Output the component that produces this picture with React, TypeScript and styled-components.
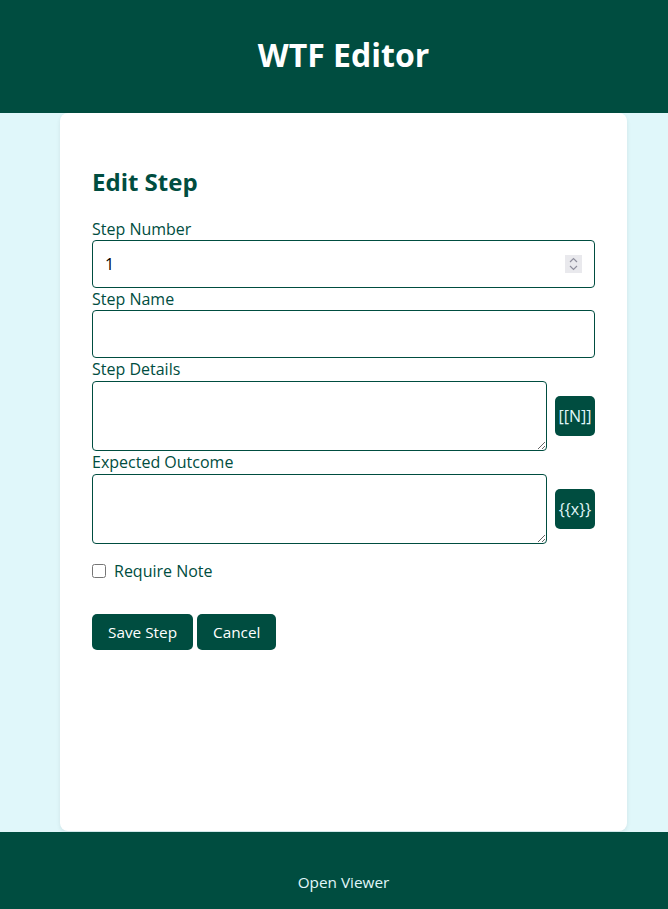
import React from "react";
import styled, { createGlobalStyle } from "styled-components";

const Global = createGlobalStyle`
  html, body { margin: 0; padding: 0; overflow-x: hidden; }
  body { font-family: "Open Sans", "Noto Sans", sans-serif; background: #e0f7fa; }
  * { box-sizing: border-box; }
`;

const Page = styled.div`
  width: 687px;
  min-height: 100vh;
  display: flex;
  flex-direction: column;
  background: #e0f7fa;
`;

const Header = styled.header`
  height: 113px;
  padding-bottom: 4px;
  background: #004d40;
  color: #fff;
  display: flex;
  align-items: center;
  justify-content: center;
`;

const Title = styled.h1`
  margin: 0;
  font-size: 32px;
  font-weight: 700;
`;

const Main = styled.main`
  flex: 1;
  display: flex;
  justify-content: center;
  padding-bottom: 1px;
`;

const Card = styled.section`
  width: 567px;
  background: #fff;
  border-radius: 8px;
  box-shadow: 0 2px 4px rgba(0, 0, 0, 0.08);
  padding: 32px;
`;

const Heading = styled.h2`
  margin: 20px 0;
  font-size: 24px;
  font-weight: 700;
  color: #004d40;
  line-height: 33px;
`;

const Label = styled.label`
  display: block;
  color: #004d40;
  font-size: 16px;
  line-height: 22px;
`;

const NumberWrap = styled.div`
  position: relative;
`;

const TextInput = styled.input`
  display: block;
  width: 100%;
  height: 48px;
  padding: 0 12px;
  border: 1px solid #004d40;
  border-radius: 4px;
  font-family: inherit;
  font-size: 16px;
  color: #000;
  outline: none;
  appearance: textfield;
  &::-webkit-inner-spin-button,
  &::-webkit-outer-spin-button {
    -webkit-appearance: none;
    margin: 0;
  }
`;

const Spinner = styled.span`
  position: absolute;
  right: 13px;
  top: 15px;
  width: 17px;
  height: 18px;
  background: #e9e9ed;
  display: flex;
  align-items: center;
  justify-content: center;
  pointer-events: none;
`;

const Row = styled.div`
  display: flex;
  align-items: center;
  gap: 8px;
`;

const TextArea = styled.textarea`
  flex: 1;
  display: block;
  height: 70px;
  margin: 1px 0 0;
  padding: 12px;
  border: 1px solid #004d40;
  border-radius: 4px;
  font-family: inherit;
  font-size: 16px;
  outline: none;
`;

const TokenButton = styled.button`
  width: 40px;
  height: 40px;
  padding: 0;
  border: none;
  border-radius: 5px;
  background: #004d40;
  color: #e0f7fa;
  font-family: inherit;
  font-size: 16px;
`;

const CheckRow = styled.label`
  display: flex;
  align-items: center;
  gap: 8px;
  margin-top: 16px;
  color: #004d40;
  font-size: 16px;
  line-height: 22px;
`;

const Check = styled.input`
  margin: 0;
  width: 14px;
  height: 14px;
`;

const Actions = styled.div`
  display: flex;
  gap: 4px;
  margin-top: 32px;
`;

const ActionButton = styled.button`
  height: 36px;
  padding: 0 16px;
  border: none;
  border-radius: 5px;
  background: #004d40;
  color: #fff;
  font-family: inherit;
  font-size: 15.33px;
`;

const Footer = styled.footer`
  height: 77px;
  background: #004d40;
  display: flex;
  justify-content: center;
  padding-top: 39px;
`;

const FooterLink = styled.a`
  color: #e0f7fa;
  font-size: 15.33px;
  line-height: 22px;
  text-decoration: none;
`;

export default function App() {
  return (
    <Page>
      <Global />
      <Header>
        <Title>WTF Editor</Title>
      </Header>
      <Main>
        <Card>
          <Heading>Edit Step</Heading>
          <Label htmlFor="num">Step Number</Label>
          <NumberWrap>
            <TextInput id="num" type="number" defaultValue={1} />
            <Spinner aria-hidden="true">
              <svg width="9" height="14" viewBox="0 0 9 14" fill="none" stroke="#8f8f9d" strokeWidth="1.2">
                <path d="M1 5 L4.5 1.5 L8 5" />
                <path d="M1 9 L4.5 12.5 L8 9" />
              </svg>
            </Spinner>
          </NumberWrap>
          <Label htmlFor="name">Step Name</Label>
          <TextInput id="name" type="text" />
          <Label htmlFor="details">Step Details</Label>
          <Row>
            <TextArea id="details" />
            <TokenButton>[[N]]</TokenButton>
          </Row>
          <Label htmlFor="outcome">Expected Outcome</Label>
          <Row>
            <TextArea id="outcome" />
            <TokenButton>{"{{x}}"}</TokenButton>
          </Row>
          <CheckRow>
            <Check type="checkbox" />
            Require Note
          </CheckRow>
          <Actions>
            <ActionButton>Save Step</ActionButton>
            <ActionButton>Cancel</ActionButton>
          </Actions>
        </Card>
      </Main>
      <Footer>
        <FooterLink href="#">Open Viewer</FooterLink>
      </Footer>
    </Page>
  );
}
